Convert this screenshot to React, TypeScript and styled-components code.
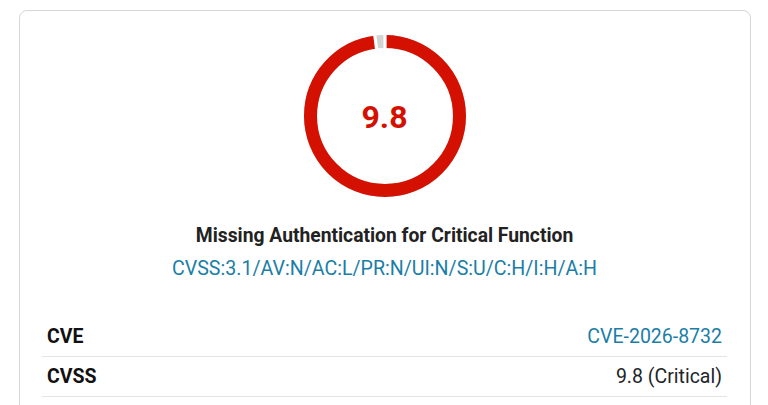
import styled, { createGlobalStyle } from 'styled-components'

const GlobalStyle = createGlobalStyle`
  body {
    margin: 0;
    background: #ffffff;
    font-family: Roboto, "Liberation Sans", Arial, sans-serif;
    color: #212529;
  }
`

const Card = styled.div`
  margin: 10px 17px 0 19px;
  border: 1px solid #d6d6d6;
  border-radius: 8px;
  padding: 24px 23px 20px 22px;
  display: flex;
  flex-direction: column;
  align-items: center;
`

const Gauge = styled.div`
  position: relative;
  width: 162px;
  height: 162px;
`

const Score = styled.div<{ $color: string }>`
  position: absolute;
  inset: 0;
  display: flex;
  align-items: center;
  justify-content: center;
  font-size: 32px;
  font-weight: 700;
  color: ${props => props.$color};
  padding-top: 1px;
`

const Title = styled.h2`
  margin: 27px 0 0;
  font-size: 19.3px;
  line-height: 24px;
  font-weight: 700;
  color: #222222;
`

const Vector = styled.a`
  margin-top: 9px;
  font-size: 19.6px;
  line-height: 24px;
  color: #1b7ea6;
  text-decoration: none;
`

const Table = styled.div`
  align-self: stretch;
  margin-top: 36px;
  display: flex;
  flex-direction: column;
`

const Row = styled.div`
  display: flex;
  justify-content: space-between;
  align-items: center;
  padding: 8px 5px 8px 5px;
  line-height: 23px;
  font-size: 19.5px;
  border-bottom: 1px solid #e2e4e7;
`

const Label = styled.span`
  font-weight: 700;
  color: #111111;
`

const Value = styled.span<{ $link?: boolean }>`
  color: ${props => props.$link ? "#1b7ea6" : "#212529"};
`

interface RingProps {
  score: number
  color: string
}

const Ring = ({ score, color }: RingProps) => {
  const size = 162
  const c = size / 2
  const r = 74.5
  const circ = 2 * Math.PI * r
  const part = (score / 10) * circ
  const rest = circ - part
  const boundaries = [0, (score / 10) * 360]

  return (
    <svg width={size} height={size} viewBox={`0 0 ${size} ${size}`}>
      <g transform={`rotate(-90 ${c} ${c})`}>
        <circle cx={c} cy={c} r={r} fill="none" stroke="#d3d3d3" strokeWidth={13} />
        <circle
          cx={c}
          cy={c}
          r={r}
          fill="none"
          stroke={color}
          strokeWidth={13}
          strokeDasharray={`${part} ${rest}`}
        />
      </g>
      {boundaries.map((deg) => {
        const a = (deg - 90) * Math.PI / 180
        return (
          <line
            key={deg}
            x1={c + 64 * Math.cos(a)}
            y1={c + 64 * Math.sin(a)}
            x2={c + 84 * Math.cos(a)}
            y2={c + 84 * Math.sin(a)}
            stroke="#ffffff"
            strokeWidth={3.2}
          />
        )
      })}
    </svg>
  )
}

const rows = [
  { label: "CVE", value: "CVE-2026-8732", link: true },
  { label: "CVSS", value: "9.8 (Critical)", link: false },
]

const App = () => {
  return (
    <>
      <GlobalStyle />
      <Card>
        <Gauge>
          <Ring score={9.8} color="#d41100" />
          <Score $color="#d41100">9.8</Score>
        </Gauge>
        <Title>Missing Authentication for Critical Function</Title>
        <Vector href="#">CVSS:3.1/AV:N/AC:L/PR:N/UI:N/S:U/C:H/I:H/A:H</Vector>
        <Table>
          {rows.map((row) => (
            <Row key={row.label}>
              <Label>{row.label}</Label>
              <Value $link={row.link}>{row.value}</Value>
            </Row>
          ))}
        </Table>
      </Card>
    </>
  )
}

export default App
